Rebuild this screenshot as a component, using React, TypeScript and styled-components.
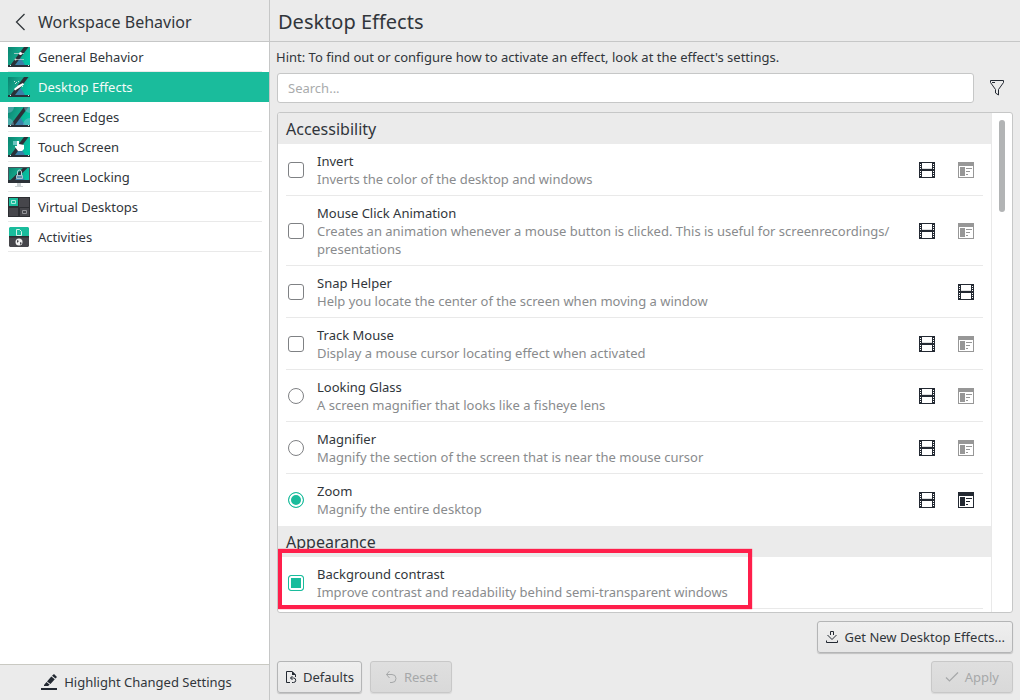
import React, { Fragment, useState } from "react";
import styled, { createGlobalStyle, css } from "styled-components";

const color = {
  text: "#31363b",
  ink: "#232932",
  muted: "#898b8d",
  placeholder: "#a9abac",
  panel: "#ebebeb",
  line: "#c6c7c7",
  soft: "#e9e9e9",
  accent: "#1abc9c",
  alert: "#ff1f4b",
};

const GlobalStyle = createGlobalStyle`
  * { box-sizing: border-box; }
  body {
    margin: 0;
    background: ${color.panel};
    color: ${color.text};
    font: 13px/18px "Noto Sans", sans-serif;
  }
  button, input { font: inherit; color: inherit; }
  h1, h2, h3, p, ul { margin: 0; padding: 0; font-weight: 400; }
  svg { display: block; flex: none; }
`;

const Window = styled.div`
  display: flex;
  height: 100vh;
`;

const Sidebar = styled.nav`
  display: flex;
  flex-direction: column;
  flex: none;
  width: 270px;
  background: #fff;
  border-right: 1px solid ${color.line};
`;

const SidebarHeader = styled.header`
  display: flex;
  align-items: center;
  gap: 10px;
  height: 42px;
  padding: 2px 14px 0;
  background: ${color.panel};
  border-bottom: 1px solid ${color.line};
`;

const BackButton = styled.button`
  padding: 0;
  border: 0;
  background: none;
`;

const SidebarTitle = styled.h2`
  font-size: 16px;
  line-height: 22px;
`;

const NavList = styled.ul`
  flex: 1;
  list-style: none;
`;

const NavLink = styled.a<{ $active: boolean }>`
  display: block;
  height: 30px;
  padding: 0 7px 0 8px;
  color: ${(p) => (p.$active ? "#f4fbf9" : color.text)};
  background: ${(p) => (p.$active ? color.accent : "transparent")};
  text-decoration: none;
`;

const NavInner = styled.span<{ $active: boolean }>`
  display: flex;
  align-items: center;
  gap: 8px;
  height: 30px;
  border-bottom: 1px solid ${(p) => (p.$active ? "transparent" : color.soft)};
`;

const HighlightButton = styled.button`
  display: flex;
  align-items: center;
  justify-content: center;
  gap: 7px;
  height: 36px;
  padding: 0 0 2px 4px;
  border: 0;
  border-top: 1px solid #c9c9c2;
  background: ${color.panel};
`;

const Main = styled.main`
  display: flex;
  flex-direction: column;
  flex: 1;
  min-width: 0;
`;

const PageHeader = styled.header`
  height: 42px;
  padding: 8px 8px 0;
  border-bottom: 1px solid ${color.line};
`;

const PageTitle = styled.h1`
  font-size: 20px;
  line-height: 28px;
`;

const Content = styled.div`
  display: flex;
  flex-direction: column;
  flex: 1;
  min-height: 0;
  padding: 6px 7px 7px;
`;

const Hint = styled.p`
  padding-bottom: 7px;
  margin-left: -1px;
`;

const SearchRow = styled.div`
  display: flex;
  align-items: center;
  gap: 16px;
  padding-right: 9px;
  margin-bottom: 9px;
`;

const SearchInput = styled.input`
  flex: 1;
  min-width: 0;
  height: 30px;
  padding: 0 10px;
  border: 1px solid ${color.line};
  border-radius: 3px;
  background: #fff;
  &::placeholder { color: ${color.placeholder}; opacity: 1; }
`;

const IconButton = styled.button`
  padding: 0;
  border: 0;
  background: none;
  color: ${color.ink};
  &:disabled { color: #979797; }
`;

const ListFrame = styled.div`
  display: flex;
  flex: 1;
  min-height: 0;
  border: 1px solid ${color.line};
  border-radius: 3px;
  background: #fff;
  overflow: hidden;
`;

const ListView = styled.div`
  flex: 1;
  min-width: 0;
  overflow: hidden;
`;

const ScrollTrack = styled.div`
  flex: none;
  width: 21px;
  padding: 7px 7px 0;
  border-left: 1px solid ${color.soft};
`;

const ScrollThumb = styled.div`
  width: 6px;
  height: 92px;
  border-radius: 3px;
  background: #b2b4b5;
`;

const SectionTitle = styled.h3`
  height: 31px;
  padding: 4px 8px;
  background: ${color.panel};
  font-size: 16px;
  line-height: 24px;
`;

const Row = styled.div<{ $last: boolean }>`
  position: relative;
  display: flex;
  align-items: center;
  margin: 0 8px;
  padding: 8px 9px 7px 2px;
  border-bottom: 1px solid ${(p) => (p.$last ? "transparent" : color.soft)};
`;

const markBase = css`
  appearance: none;
  flex: none;
  width: 16px;
  height: 16px;
  margin: 0 13px 0 0;
  border: 1px solid #7f8184;
  background: #fff;
  &:checked {
    border-color: ${color.accent};
    background: ${color.accent};
    box-shadow: inset 0 0 0 2px #fff;
  }
`;

const CheckMark = styled.input`
  ${markBase}
  border-radius: 3px;
`;

const RadioMark = styled.input`
  ${markBase}
  border-radius: 50%;
`;

const RowLabel = styled.label`
  flex: 1;
  min-width: 0;
`;

const EffectName = styled.span`
  display: block;
`;

const EffectInfo = styled.span`
  display: block;
  color: ${color.muted};
`;

const RowActions = styled.div`
  display: flex;
  gap: 23px;
  padding-left: 14px;
`;

const Callout = styled.div`
  position: absolute;
  top: -8px;
  left: -8px;
  width: 474px;
  height: 60px;
  border: 4px solid ${color.alert};
  box-shadow: 0 0 1px ${color.alert};
  pointer-events: none;
`;

const ButtonBar = styled.div`
  display: flex;
  gap: 8px;
  margin-top: 8px;
`;

const Spacer = styled.span`
  flex: 1;
`;

const PushButton = styled.button`
  display: flex;
  align-items: center;
  justify-content: center;
  gap: 6px;
  height: 32px;
  padding: 0 7px;
  border: 1px solid #b4b5b6;
  border-radius: 3px;
  background: linear-gradient(#efefef, #e6e6e6);
  box-shadow: 0 1px 1px rgba(0, 0, 0, 0.18);
  &:disabled {
    padding: 0 13px;
    color: #a6a8a9;
    border-color: #c8c8c8;
    background: linear-gradient(#dfdfdf, #d9d9d9);
    box-shadow: 0 1px 1px rgba(0, 0, 0, 0.08);
  }
`;

type NavKind = "general" | "effects" | "edges" | "touch" | "lock" | "desktops" | "activities";

function Wallpaper({ id, height = 20 }: { id: string; height?: number }) {
  return (
    <>
      <defs>
        <linearGradient id={id} x1="0" x2="1" y1="0" y2="0.4">
          <stop offset="0" stopColor="#0a8470" />
          <stop offset="0.5" stopColor="#14a58a" />
          <stop offset="1" stopColor="#02c3a4" />
        </linearGradient>
      </defs>
      <path d={`M0 0H22V${height}H0Z`} fill={`url(#${id})`} />
      <path d={`M12 ${height * 0.5}L17 ${height - 2}H7Z`} fill="#3b7fa9" />
      <path d={`M16 0H20.500L7 ${height - 2}H2.500Z`} fill="#2c3038" />
      <path d={`M0 ${height - 2}H22V${height}H0Z`} fill="#28313a" />
    </>
  );
}

function NavIcon({ kind }: { kind: NavKind }) {
  const id = `wall-${kind}`;
  return (
    <svg width="22" height="20" viewBox="0 0 22 20" aria-hidden="true">
      {(kind === "general" || kind === "effects" || kind === "edges" || kind === "touch") && (
        <>
          <Wallpaper id={id} />
          <path d="M2 18h1v1H2zM20 18h1v1h-1z" fill="#dfe6e8" />
        </>
      )}
      {kind === "general" && (
        <g fill="#d5dede">
          <path d="M6 6h10v1H6z" opacity="0.7" />
          <circle cx="12.500" cy="6.500" r="1.500" fill="#fff" />
          <path d="M7 12h9v1H7z" opacity="0.6" />
          <circle cx="7.500" cy="12.500" r="1" />
        </g>
      )}
      {kind === "effects" && (
        <g fill="#fff">
          <path d="M6 12L10 8.500L15 6L16 7.500L11 11L7 13.500Z" />
          <path d="M6 4h1v1H6zM8 5h1v1H8zM10 4h1v1h-1zM7 6h1v1H7zM14 9h1v1h-1z" opacity="0.75" />
        </g>
      )}
      {kind === "edges" && (
        <g fill="#80b9cf" opacity="0.5">
          <path d="M0 0H6A6 6 0 0 1 0 6ZM22 0V6A6 6 0 0 1 16 0ZM0 11A7 7 0 0 1 6 18H0ZM22 11V18H15A7 7 0 0 1 22 11Z" />
        </g>
      )}
      {kind === "touch" && (
        <>
          <path d="M5 4h6v4H5z" fill="#9edde4" opacity="0.65" />
          <path d="M9 4H11V7L16 8V12L14 14H10L7 10V9H9Z" fill="#fff" />
        </>
      )}
      {kind === "lock" && (
        <>
          <Wallpaper id={id} height={15} />
          <path d="M9.500 8V5A2 2 0 0 1 13.500 5V8" fill="none" stroke="#bed4d8" />
          <path d="M8.500 8.500H14.500V11.500H8.500Z" fill="#5c8fae" stroke="#a5c1ca" />
          <path d="M0.500 0.500H21.500V14.500H0.500Z" fill="none" stroke="#46545b" />
          <path d="M0 13H22V16H0Z" fill="#2c3137" />
          <path d="M9 16h4v3H9zM7 19h8v1H7z" fill="#cbd1d3" />
        </>
      )}
      {kind === "desktops" && (
        <>
          <path d="M0 0H22V20H0Z" fill="#2d2e32" />
          <path d="M1 1H10V9H1Z" fill="#1abc9c" />
          <path d="M11 1H21V10H11ZM1 11H10V19H1ZM12 11H21V19H12Z" fill="#46464b" />
          <path d="M3.500 3.500H7.500V6.500H3.500Z" fill="none" stroke="#a9e8da" />
          <path d="M14.500 13.500H18.500V16.500H14.500Z" fill="none" stroke="#939397" />
        </>
      )}
      {kind === "activities" && (
        <>
          <path d="M2 0H20L21 1V9H1V1Z" fill="#1abc9c" />
          <path d="M1 10H21V19L20 20H2L1 19Z" fill="#45454a" />
          <path d="M1 9H21V10.500H1Z" fill="#2b2d31" />
          <path d="M8.500 2.500H11.500L13.500 4.500V8.500H8.500Z" fill="none" stroke="#d2f2ea" />
          <circle cx="11" cy="15" r="3.500" fill="#f1f1f1" />
          <path d="M9 13L11 14L9 16ZM12 15L14 16L12 18Z" fill="#45454a" />
        </>
      )}
    </svg>
  );
}

const FilmIcon = () => (
  <svg width="16" height="16" viewBox="0 0 16 16" fill="currentColor" shapeRendering="crispEdges" aria-hidden="true">
    <path
      fillRule="evenodd"
      d="M0 0H16V16H0ZM3 1V7H13V1ZM3 9V15H13V9ZM1 2v1h1V2ZM1 4v1h1V4ZM1 6v1h1V6ZM1 9v1h1V9ZM1 11v1h1v-1ZM1 13v1h1v-1ZM14 2v1h1V2ZM14 4v1h1V4ZM14 6v1h1V6ZM14 9v1h1V9ZM14 11v1h1v-1ZM14 13v1h1v-1Z"
    />
    <path d="M3 6h10v1H3z" opacity="0.15" />
  </svg>
);

const ConfigureIcon = () => (
  <svg width="16" height="16" viewBox="0 0 16 16" fill="currentColor" shapeRendering="crispEdges" aria-hidden="true">
    <path fillRule="evenodd" d="M0 0H16V16H0ZM1 4V15H15V4Z" />
    <path d="M2 5H7V14H2ZM8 6H14V7H8ZM8 9H12V10H8ZM8 12H10V13H8Z" />
  </svg>
);

const FunnelIcon = () => (
  <svg width="14" height="16" viewBox="0 0 14 16" fill="none" stroke="currentColor" aria-hidden="true">
    <path d="M0.500 0.500H13.500V2.500L8.500 9.500V15L5.500 13V9.500L0.500 2.500Z" />
    <path d="M2 2.500H5" />
  </svg>
);

const BackIcon = () => (
  <svg width="14" height="18" viewBox="0 0 14 18" fill="none" stroke={color.text} strokeWidth="1.300" aria-hidden="true">
    <path d="M10.500 1L2.500 9L10.500 17" />
  </svg>
);

const MarkerIcon = () => (
  <svg width="16" height="16" viewBox="0 0 16 16" fill={color.ink} aria-hidden="true">
    <path d="M0 14H16V16H0ZM13 0L16 3L14.500 4.500L11 1.800ZM10.300 2.500L13.800 5.300L9.500 10L6 7.500ZM5.500 8L8.700 10.800L7 12H3V11Z" />
  </svg>
);

const DownloadIcon = () => (
  <svg width="14" height="14" viewBox="0 0 14 14" fill="none" stroke={color.ink} aria-hidden="true">
    <path d="M5.500 5V1.500H8.500V5M2.500 5L7 9.500L11.500 5M1.500 10.500V12.500H12.500V10.500" />
  </svg>
);

const DefaultsIcon = () => (
  <svg width="12" height="14" viewBox="0 0 12 14" fill="none" stroke={color.ink} aria-hidden="true">
    <path d="M5 12.500H1.500V1.500H7L10.500 5V7" />
    <path d="M7 1V5H11Z" fill={color.ink} stroke="none" />
    <path d="M7.500 6L5.500 8L7.500 10M5.500 8H8.500A2 2 0 0 1 8.500 12.500H7" />
  </svg>
);

const UndoIcon = () => (
  <svg width="14" height="14" viewBox="0 0 14 14" fill="none" stroke="currentColor" aria-hidden="true">
    <path d="M5.500 1L2.500 4.500L5.500 8M2.500 4.500H8A4 4 0 0 1 8 12.500H6" />
  </svg>
);

const ApplyIcon = () => (
  <svg width="14" height="14" viewBox="0 0 14 14" fill="none" stroke="currentColor" strokeWidth="1.200" aria-hidden="true">
    <path d="M1 7.500L4.500 11L13 2.500" />
  </svg>
);

const pages: { label: string; kind: NavKind }[] = [
  { label: "General Behavior", kind: "general" },
  { label: "Desktop Effects", kind: "effects" },
  { label: "Screen Edges", kind: "edges" },
  { label: "Touch Screen", kind: "touch" },
  { label: "Screen Locking", kind: "lock" },
  { label: "Virtual Desktops", kind: "desktops" },
  { label: "Activities", kind: "activities" },
];

interface Effect {
  id: string;
  name: string;
  info: string;
  group?: string;
  video?: boolean;
  config?: boolean;
  callout?: boolean;
}

const sections: { title: string; effects: Effect[] }[] = [
  {
    title: "Accessibility",
    effects: [
      { id: "invert", name: "Invert", info: "Inverts the color of the desktop and windows", video: true, config: true },
      {
        id: "click",
        name: "Mouse Click Animation",
        info: "Creates an animation whenever a mouse button is clicked. This is useful for screenrecordings/presentations",
        video: true,
        config: true,
      },
      { id: "snap", name: "Snap Helper", info: "Help you locate the center of the screen when moving a window", video: true },
      { id: "track", name: "Track Mouse", info: "Display a mouse cursor locating effect when activated", video: true, config: true },
      { id: "glass", name: "Looking Glass", info: "A screen magnifier that looks like a fisheye lens", group: "zoom", video: true, config: true },
      { id: "magnifier", name: "Magnifier", info: "Magnify the section of the screen that is near the mouse cursor", group: "zoom", video: true, config: true },
      { id: "zoom", name: "Zoom", info: "Magnify the entire desktop", group: "zoom", video: true, config: true },
    ],
  },
  {
    title: "Appearance",
    effects: [
      {
        id: "contrast",
        name: "Background contrast",
        info: "Improve contrast and readability behind semi-transparent windows",
        callout: true,
      },
    ],
  },
];

/* Lets a long description wrap after a slash. */
const Breakable = ({ text }: { text: string }) => (
  <>
    {text.split("/").map((part, index) => (
      <Fragment key={index}>
        {index > 0 && (
          <>
            /<wbr />
          </>
        )}
        {part}
      </Fragment>
    ))}
  </>
);

export default function App() {
  const [query, setQuery] = useState("");
  const [enabled, setEnabled] = useState<string[]>(["zoom", "contrast"]);

  const toggle = (effect: Effect) =>
    setEnabled((current) => {
      if (effect.group) {
        const peers = sections.flatMap((s) => s.effects).filter((e) => e.group === effect.group);
        return [...current.filter((id) => !peers.some((p) => p.id === id)), effect.id];
      }
      return current.includes(effect.id) ? current.filter((id) => id !== effect.id) : [...current, effect.id];
    });

  return (
    <Window>
      <GlobalStyle />
      <Sidebar>
        <SidebarHeader>
          <BackButton type="button" aria-label="Back">
            <BackIcon />
          </BackButton>
          <SidebarTitle>Workspace Behavior</SidebarTitle>
        </SidebarHeader>
        <NavList>
          {pages.map(({ label, kind }) => (
            <li key={kind}>
              <NavLink href={`#${kind}`} $active={kind === "effects"}>
                <NavInner $active={kind === "effects"}>
                  <NavIcon kind={kind} />
                  {label}
                </NavInner>
              </NavLink>
            </li>
          ))}
        </NavList>
        <HighlightButton type="button">
          <MarkerIcon />
          Highlight Changed Settings
        </HighlightButton>
      </Sidebar>

      <Main>
        <PageHeader>
          <PageTitle>Desktop Effects</PageTitle>
        </PageHeader>
        <Content>
          <Hint>Hint: To find out or configure how to activate an effect, look at the effect's settings.</Hint>
          <SearchRow>
            <SearchInput
              type="text"
              aria-label="Search"
              placeholder="Search..."
              value={query}
              onChange={(e) => setQuery(e.target.value)}
            />
            <IconButton type="button" aria-label="Filter">
              <FunnelIcon />
            </IconButton>
          </SearchRow>

          <ListFrame>
            <ListView>
              {sections.map((section) => (
                <section key={section.title}>
                  <SectionTitle>{section.title}</SectionTitle>
                  {section.effects.map((effect, index) => {
                    const on = enabled.includes(effect.id);
                    const Mark = effect.group ? RadioMark : CheckMark;
                    return (
                      <Row key={effect.id} $last={index === section.effects.length - 1 && !effect.callout}>
                        <Mark
                          type={effect.group ? "radio" : "checkbox"}
                          id={effect.id}
                          name={effect.group ?? effect.id}
                          checked={on}
                          onChange={() => toggle(effect)}
                        />
                        <RowLabel htmlFor={effect.id}>
                          <EffectName>{effect.name}</EffectName>
                          <EffectInfo>
                            <Breakable text={effect.info} />
                          </EffectInfo>
                        </RowLabel>
                        <RowActions>
                          {effect.video && (
                            <IconButton type="button" aria-label={`Preview ${effect.name}`}>
                              <FilmIcon />
                            </IconButton>
                          )}
                          {effect.config && (
                            <IconButton type="button" aria-label={`Configure ${effect.name}`} disabled={!on}>
                              <ConfigureIcon />
                            </IconButton>
                          )}
                        </RowActions>
                        {effect.callout && <Callout />}
                      </Row>
                    );
                  })}
                </section>
              ))}
            </ListView>
            <ScrollTrack>
              <ScrollThumb />
            </ScrollTrack>
          </ListFrame>

          <ButtonBar>
            <Spacer />
            <PushButton type="button">
              <DownloadIcon />
              Get New Desktop Effects...
            </PushButton>
          </ButtonBar>
          <ButtonBar>
            <PushButton type="button">
              <DefaultsIcon />
              Defaults
            </PushButton>
            <PushButton type="button" disabled>
              <UndoIcon />
              Reset
            </PushButton>
            <Spacer />
            <PushButton type="button" disabled>
              <ApplyIcon />
              Apply
            </PushButton>
          </ButtonBar>
        </Content>
      </Main>
    </Window>
  );
}
